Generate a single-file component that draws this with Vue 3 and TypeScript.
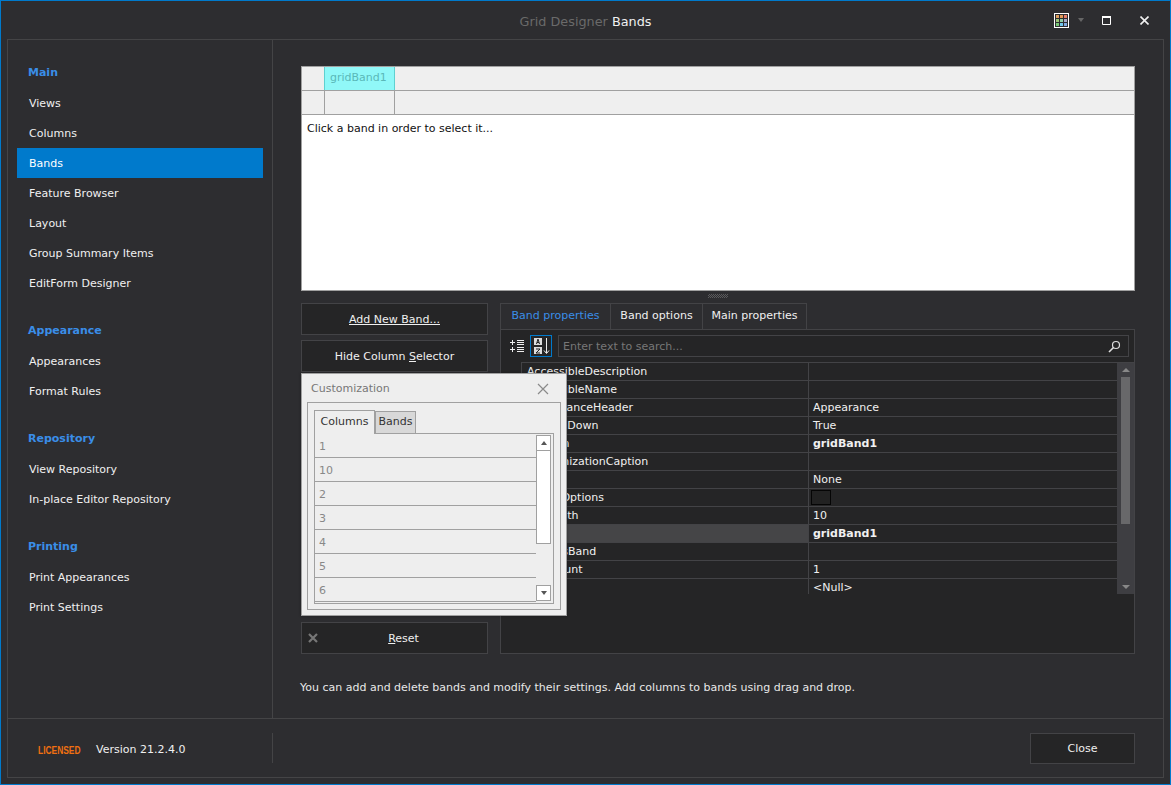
<script setup lang="ts">
interface NavGroup { title: string; items: string[] }
interface PropRow { name: string; value?: string; bold?: boolean; swatch?: boolean; selected?: boolean }

const groups: NavGroup[] = [
  { title: 'Main', items: ['Views', 'Columns', 'Bands', 'Feature Browser', 'Layout', 'Group Summary Items', 'EditForm Designer'] },
  { title: 'Appearance', items: ['Appearances', 'Format Rules'] },
  { title: 'Repository', items: ['View Repository', 'In-place Editor Repository'] },
  { title: 'Printing', items: ['Print Appearances', 'Print Settings'] },
]
const rows: PropRow[] = [
  { name: 'AccessibleDescription' },
  { name: 'AccessibleName' },
  { name: 'AppearanceHeader', value: 'Appearance' },
  { name: 'AutoFillDown', value: 'True' },
  { name: 'Caption', value: 'gridBand1', bold: true },
  { name: 'CustomizationCaption' },
  { name: 'Fixed', value: 'None' },
  { name: 'ImageOptions', swatch: true },
  { name: 'MinWidth', value: '10' },
  { name: 'Name', value: 'gridBand1', bold: true, selected: true },
  { name: 'ParentsBand' },
  { name: 'RowCount', value: '1' },
  { name: 'Tag', value: '<Null>' },
]
const columns = ['1', '10', '2', '3', '4', '5', '6']
const swatches = ['#e0a060', '#e09a5a', '#e8806a', '#9cc878', '#8fd0a8', '#a8a8c8', '#78c878', '#70c8f0', '#80a8e0']
</script>

<template>
  <div class="window">
    <header class="titlebar">
      <div class="title"><span class="dim">Grid Designer</span> Bands</div>
      <div class="controls">
        <span class="palette"><i v-for="(c, n) in swatches" :key="n" :style="{ background: c }"></i></span>
        <span class="caret"></span>
        <svg class="max" width="9" height="9" viewBox="0 0 9 9"><path d="M.5 .5h8v8h-8z" fill="none" stroke="#fff" stroke-width="1"/><path d="M0 0h9v2H0z" fill="#fff"/></svg>
        <svg class="close" width="9" height="9" viewBox="0 0 9 9"><path d="M.5 .5l8 8M8.500 .5l-8 8" stroke="#f0f0f0" stroke-width="1.600" fill="none"/></svg>
      </div>
    </header>
    <div class="frame">
      <div class="main">
        <nav class="sidebar">
          <section v-for="g in groups" :key="g.title" class="group">
            <h3>{{ g.title }}</h3>
            <a v-for="item in g.items" :key="item" :class="{ active: item === 'Bands' }">{{ item }}</a>
          </section>
        </nav>
        <div class="content">
          <div class="preview">
            <div class="band-row">
              <div class="c0"></div><div class="c1 sel">gridBand1</div><div class="rest"></div>
            </div>
            <div class="band-row">
              <div class="c0"></div><div class="c1"></div><div class="rest"></div>
            </div>
            <p>Click a band in order to select it...</p>
          </div>
          <div class="splitter"><span></span></div>
          <div class="lower">
            <div class="actions">
              <button class="btn"><u>Add New Band...</u></button>
              <button class="btn">Hide Column <u>S</u>elector</button>
              <div class="spring"></div>
              <button class="btn reset">
                <svg width="10" height="10" viewBox="0 0 10 10"><path d="M1 1l8 8M9 1l-8 8" stroke="#777" stroke-width="2.200"/></svg>
                <span><u>R</u>eset</span>
              </button>
            </div>
            <div class="props">
              <div class="tabs">
                <div class="tab on">Band properties</div>
                <div class="tab">Band options</div>
                <div class="tab">Main properties</div>
              </div>
              <div class="panel">
                <div class="toolbar">
                  <svg class="cat" width="14" height="14" viewBox="0 0 14 14"><path d="M0 3.500h5M2.500 1v5M0 10.500h5M2.500 8v5M7 1.500h7M7 3.500h7M7 5.500h7M7 8.500h7M7 10.500h7M7 12.500h7" stroke="#eee" stroke-width="1" fill="none"/></svg>
                  <span class="az">
                    <svg width="20" height="18" viewBox="0 0 20 18"><path d="M3 1h8v7H3zM3 10h8v7H3z" fill="#ddd"/><path d="M5.500 7l1.500-5 1.500 5M6 5.500h2M5 12h4l-4 4h4" stroke="#222" stroke-width="1" fill="none"/><path d="M15.500 1v15M13 13.500l2.500 3 2.500-3" stroke="#eee" stroke-width="1" fill="none"/></svg>
                  </span>
                  <div class="search">
                    <span>Enter text to search...</span>
                    <svg width="13" height="13" viewBox="0 0 13 13"><circle cx="8" cy="5" r="3.500" fill="none" stroke="#ddd" stroke-width="1.200"/><path d="M5.500 7.500L1 12" stroke="#ddd" stroke-width="1.600"/></svg>
                  </div>
                </div>
                <div class="grid">
                  <div class="rows">
                    <div v-for="r in rows" :key="r.name" class="row">
                      <div class="name" :class="{ selected: r.selected }">{{ r.name }}</div>
                      <div class="value" :class="{ bold: r.bold }">
                        <span v-if="r.swatch" class="swatch"></span>{{ r.value }}
                      </div>
                    </div>
                  </div>
                  <div class="vbar">
                    <span class="up"></span>
                    <span class="thumb"></span>
                    <span class="dn"></span>
                  </div>
                </div>
              </div>
            </div>
          </div>
          <p class="hint">You can add and delete bands and modify their settings. Add columns to bands using drag and drop.</p>
        </div>

        <div class="custom">
          <div class="custom-title">
            <span>Customization</span>
            <svg width="12" height="12" viewBox="0 0 12 12"><path d="M1 1l10 10M11 1L1 11" stroke="#8a8a8a" stroke-width="1.200"/></svg>
          </div>
          <div class="custom-body">
            <div class="ctabs">
              <div class="ctab on">Columns</div>
              <div class="ctab">Bands</div>
            </div>
            <div class="clist">
              <div class="citems">
                <div v-for="c in columns" :key="c" class="citem">{{ c }}</div>
              </div>
              <div class="cbar">
                <span class="cbtn"><i class="tri-up"></i></span>
                <span class="cthumb"></span>
                <span class="cbtn last"><i class="tri-dn"></i></span>
              </div>
            </div>
          </div>
        </div>
      </div>
      <footer class="footer">
        <div class="info">
          <span class="lic">LICENSED</span>
          <span>Version 21.2.4.0</span>
        </div>
        <button class="btn closebtn">Close</button>
      </footer>
    </div>
  </div>
</template>

<style>
html, body { margin: 0; background: #2d2d30; }
</style>

<style scoped>
* { box-sizing: border-box; }
.window {
  width: 1171px; height: 785px; background: #2d2d30; border: 1px solid #007acc;
  display: flex; flex-direction: column;
  font: 11px/14px "DejaVu Sans", sans-serif; color: #f0f0f0; overflow: hidden;
}
.titlebar { height: 38px; flex: none; display: flex; align-items: center; justify-content: center; position: relative; padding-top: 3px; }
.title { font-size: 12.800px; color: #f0f0f0; }
.dim { color: #6a6a6a; }
.controls { position: absolute; inset: 0 auto 0 1053px; display: flex; align-items: center; }
.palette { width: 15px; height: 15px; border: 1px solid #fff; display: grid; grid-template-columns: repeat(3, 3px); grid-auto-rows: 3px; gap: 1px; padding: 1px; background: #2d2d30; }
.palette i { display: block; }
.caret { width: 0; height: 0; border: 3.5px solid transparent; border-top: 4px solid #666; border-bottom: 0; margin-left: 9px; }
.max { margin-left: 18px; }
.close { margin-left: 29px; }
.frame { flex: 1; margin: 0 6px 6px; border: 1px solid #444446; display: flex; flex-direction: column; min-height: 0; }
.main { flex: 1; display: flex; min-height: 0; position: relative; border-bottom: 1px solid #444446; }
.sidebar { width: 265px; flex: none; border-right: 1px solid #444446; padding: 18px 9px 0; }
.group { margin-bottom: 18px; }
.group h3 { margin: 0; height: 30px; line-height: 30px; font-size: 11px; font-weight: 700; color: #3a8ee8; padding-left: 11px; }
.group a { display: block; height: 30px; line-height: 32px; padding-left: 12px; color: #f0f0f0; }
.group a.active { background: #007acc; color: #fff; }
.content { flex: 1; padding: 26px 28px 0; min-width: 0; display: flex; flex-direction: column; }
.preview { height: 225px; flex: none; background: #fff; border: 1px solid #a0a0a0; color: #111; }
.band-row { display: flex; height: 24px; background: #efefef; border-bottom: 1px solid #a0a0a0; }
.c0 { width: 23px; border-right: 1px solid #a0a0a0; }
.c1 { width: 70px; border-right: 1px solid #a0a0a0; padding: 4px 0 0 5px; }
.c1.sel { background: #90f8f8; color: #5ab8b8; border: 1px solid #5fd0d0; border-top: 0; border-bottom: 0; margin-left: -1px; width: 71px; }
.rest { flex: 1; }
.preview p { margin: 7px 0 0 5px; }
.splitter { height: 12px; flex: none; display: flex; justify-content: center; padding-top: 3px; }
.splitter span { width: 20px; height: 4px; background: repeating-conic-gradient(#5a5a5c 0 25%, transparent 0 50%) 0 0 / 2px 2px; }
.lower { height: 351px; flex: none; display: flex; gap: 12px; }
.actions { width: 187px; flex: none; display: flex; flex-direction: column; gap: 5px; }
.spring { flex: 1; }
.btn { height: 32px; background: #252526; border: 1px solid #434346; color: #f0f0f0; font: inherit; padding: 2px 0 0; display: block; width: 100%; flex: none; }
.reset { position: relative; padding-left: 18px; }
.reset svg { position: absolute; left: 6px; top: 10px; }
.props { flex: 1; min-width: 0; display: flex; flex-direction: column; }
.tabs { display: flex; height: 26px; flex: none; }
.tab { padding: 5px 0 0; text-align: center; border: 1px solid #434346; border-bottom: 0; margin-right: -1px; width: 93px; background: #2d2d30; }
.tab.on { width: 111px; color: #3a8ee8; }
.tab:last-child { width: 105px; }
.panel { flex: 1; background: #252526; border: 1px solid #434346; padding: 5px 0 0; min-height: 0; }
.toolbar { display: flex; align-items: center; height: 22px; padding: 0 5px 0 9px; }
.cat { flex: none; }
.az { width: 22px; height: 22px; border: 1px solid #007acc; margin-left: 6px; display: flex; align-items: center; justify-content: center; flex: none; }
.search { flex: 1; margin-left: 6px; height: 22px; border: 1px solid #434346; padding: 4px 8px 0 4px; display: flex; justify-content: space-between; color: #777; }
.search svg { margin-top: 0; margin-right: -1px; }
.grid { display: flex; margin: 5px 0 0 20px; height: 232px; border-top: 1px solid #434346; border-left: 1px solid #434346; overflow: hidden; }
.rows { flex: 1; min-width: 0; }
.row { display: flex; height: 18px; border-bottom: 1px solid #434346; }
.name { width: 287px; flex: none; border-right: 1px solid #434346; padding: 2px 0 0 5px; }
.name.selected { background: #454547; }
.value { flex: 1; padding: 2px 0 0 4px; white-space: nowrap; }
.bold { font-weight: 700; }
.swatch { display: block; width: 20px; height: 15px; border: 1px solid #050505; background: #222; margin: -1px 0 0 -2px; }
.vbar { width: 17px; flex: none; background: #3e3e42; display: flex; flex-direction: column; align-items: center; }
.up { width: 0; height: 0; border: 4px solid transparent; border-bottom: 4px solid #888; border-top: 0; margin-top: 5px; }
.thumb { width: 9px; height: 147px; background: #68686a; margin-top: 5px; }
.dn { width: 0; height: 0; border: 4px solid transparent; border-top: 4px solid #888; border-bottom: 0; margin-top: auto; margin-bottom: 5px; }
.hint { margin: 27px 0 0 -1px; color: #e8e8e8; white-space: nowrap; }
.footer { height: 58px; flex: none; display: flex; align-items: center; justify-content: space-between; padding-right: 28px; }
.info { width: 265px; height: 30px; border-right: 1px solid #444446; display: flex; align-items: center; gap: 15px; padding: 3px 0 0 30px; }
.lic { color: #f07010; font-weight: 700; font-family: "Liberation Sans", sans-serif; font-size: 10.500px; transform: scaleX(0.8); transform-origin: left; width: 42px; white-space: nowrap; margin-right: 1px; }
.closebtn { width: 105px; height: 31px; margin-top: 1px; padding-top: 0; }
.custom { position: absolute; left: 293px; top: 333px; width: 266px; height: 243px; background: #eeeeee; border: 1px solid #a0a0a0; color: #333; padding: 0 5px; box-shadow: 0 0 3px rgba(0,0,0,.3); }
.custom-title { height: 28px; display: flex; align-items: center; justify-content: space-between; color: #777; padding: 1px 12px 0 4px; }
.custom-body { border: 1px solid #a0a0a0; height: 208px; padding: 7px 6px 0; }
.ctabs { display: flex; align-items: flex-end; height: 23px; }
.ctab { width: 41px; height: 22px; background: #d8d8d8; border: 1px solid #a0a0a0; border-bottom: 0; text-align: center; padding-top: 3px; }
.ctab.on { width: 61px; background: #eeeeee; position: relative; z-index: 1; margin-bottom: -1px; height: 24px; padding-top: 4px; }
.clist { border: 1px solid #a0a0a0; height: 171px; display: flex; }
.citems { flex: 1; min-width: 0; }
.citem { height: 24px; border-bottom: 1px solid #a0a0a0; padding: 6px 0 0 4px; color: #888; }
.cbar { width: 17px; flex: none; display: flex; flex-direction: column; padding-top: 1px; }
.cbtn { display: flex; align-items: center; justify-content: center; width: 15px; height: 16px; background: #fff; border: 1px solid #a0a0a0; }
.cbtn.last { margin-top: auto; margin-bottom: 2px; }
.cthumb { width: 15px; height: 93px; background: #fff; border: 1px solid #a0a0a0; border-top: 0; }
.tri-up, .tri-dn { width: 0; height: 0; border: 3.500px solid transparent; }
.tri-up { border-bottom: 4px solid #555; border-top: 0; }
.tri-dn { border-top: 4px solid #555; border-bottom: 0; }
</style>
